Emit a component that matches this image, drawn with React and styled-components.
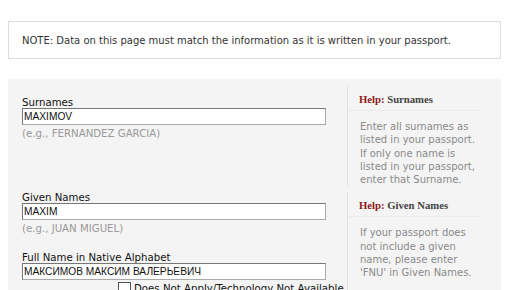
import React from 'react'
import styled, { createGlobalStyle } from 'styled-components'

const GlobalStyle = createGlobalStyle`
  html, body {
    margin: 0;
    padding: 0;
    background: #fff;
  }
  body {
    font-family: "DejaVu Sans", Verdana, sans-serif;
    overflow: hidden;
  }
`

const Page = styled.div`
  width: 493px;
  padding: 21px 0 0 8px;
`

const Note = styled.div`
  height: 36px;
  border: 1px solid #dcdcdc;
  padding-left: 13px;
  display: flex;
  align-items: center;
  font-size: 10px;
  color: #333;
`

const Panel = styled.div`
  margin-top: 20px;
  background: #f4f4f4;
  padding-top: 7px;
  height: 230px;
`

const Group = styled.div`
  display: grid;
  grid-template-columns: 339px 1fr;
  & + & {
    margin-top: 6px;
  }
`

const Fields = styled.div`
  padding: ${p => (p.$first ? '11px' : '0')} 0 0 14px;
`

const Field = styled.div`
  & + & {
    margin-top: 18px;
  }
`

const Label = styled.label`
  display: block;
  font-size: 10.2px;
  line-height: 11px;
  color: #111;
`

const Input = styled.div`
  box-sizing: border-box;
  width: 304px;
  height: 17px;
  background: #fff;
  border: 1px solid #aaa;
  border-top-color: #777;
  border-left-color: #777;
  padding-left: 1px;
  font-family: "Liberation Sans", Arial, sans-serif;
  font-size: 10.2px;
  line-height: 15px;
  color: #111;
`

const Hint = styled.div`
  margin-top: 3px;
  font-size: 10.2px;
  color: #999;
`

const CheckRow = styled.div`
  display: flex;
  align-items: center;
  gap: 3px;
  margin-top: 2px;
  padding-left: 96px;
  font-size: 10.2px;
  color: #111;
`

const Box = styled.span`
  width: 11px;
  height: 11px;
  border: 1px solid #555;
  background: #fff;
`

const Help = styled.div`
  border-left: 1px solid #e2e2e2;
  padding: 7px 21px 0 12px;
`

const HelpTitle = styled.div`
  font-family: "Liberation Serif", "Times New Roman", serif;
  font-weight: bold;
  font-size: 10.7px;
  line-height: 13px;
  color: #444;
  padding-bottom: 4px;
  border-bottom: 1px solid #ebebeb;
  margin-left: -12px;
  padding-left: 11px;

  b {
    color: #8b1a1a;
  }
`

const HelpText = styled.p`
  margin: 9px 0 0;
  font-size: 10px;
  line-height: 13.3px;
  color: #8a8a8a;
`

export default function App () {
  return (
    <Page>
      <GlobalStyle />
      <Note>NOTE: Data on this page must match the information as it is written in your passport.</Note>
      <Panel>
        <Group>
          <Fields $first>
            <Field>
              <Label>Surnames</Label>
              <Input>MAXIMOV</Input>
              <Hint>(e.g., FERNANDEZ GARCIA)</Hint>
            </Field>
          </Fields>
          <Help>
            <HelpTitle><b>Help:</b> Surnames</HelpTitle>
            <HelpText>Enter all surnames as listed in your passport. If only one name is listed in your passport, enter that Surname.</HelpText>
          </Help>
        </Group>
        <Group>
          <Fields>
            <Field>
              <Label>Given Names</Label>
              <Input>MAXIM</Input>
              <Hint>(e.g., JUAN MIGUEL)</Hint>
            </Field>
            <Field>
              <Label>Full Name in Native Alphabet</Label>
              <Input>МАКСИМОВ МАКСИМ ВАЛЕРЬЕВИЧ</Input>
              <CheckRow>
                <Box />
                <span>Does Not Apply/Technology Not Available</span>
              </CheckRow>
            </Field>
          </Fields>
          <Help>
            <HelpTitle><b>Help:</b> Given Names</HelpTitle>
            <HelpText>If your passport does not include a given name, please enter 'FNU' in Given Names.</HelpText>
          </Help>
        </Group>
      </Panel>
    </Page>
  )
}
